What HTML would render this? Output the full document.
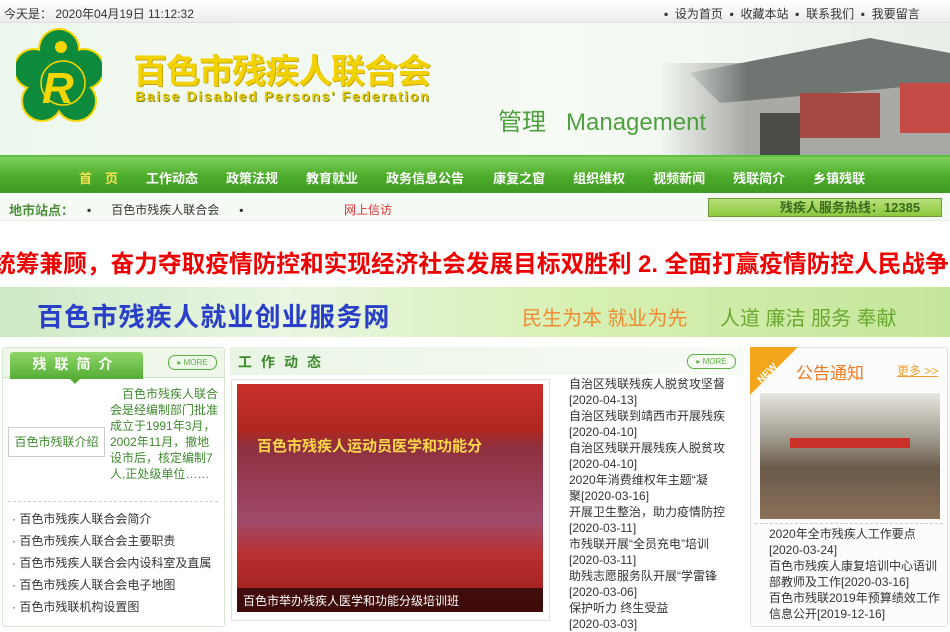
<!DOCTYPE html>
<html><head><meta charset="utf-8"><style>
*{margin:0;padding:0;box-sizing:border-box}
body{width:950px;height:621px;overflow:hidden;background:#fff;font-family:"Liberation Sans","Noto Sans CJK SC",sans-serif;font-size:12px;color:#333;position:relative}
.a{position:absolute;white-space:nowrap}
.n span{margin-left:28px}
</style></head><body>
<div class="a" style="left:0;top:0;width:950px;height:23px;background:linear-gradient(#fff,#ececec);border-bottom:1px solid #e0e0e0"></div>
<div class="a" style="left:4px;top:5px;font-size:12px;color:#333">今天是： 2020年04月19日 11:12:32</div>
<div class="a" style="left:664px;top:5px;font-size:12px;color:#333;word-spacing:0">▪ &nbsp;设为首页 &nbsp;▪ &nbsp;收藏本站 &nbsp;▪ &nbsp;联系我们 &nbsp;▪ &nbsp;我要留言</div>
<div class="a" style="left:0;top:23px;width:950px;height:133px;background:linear-gradient(90deg,#eef7ee,#f6fbf5 60%,#e8efe8)"></div>
<svg class="a" style="left:660px;top:23px" width="290" height="133"><defs><linearGradient id="f" x1="0" x2="1"><stop offset="0" stop-color="#f3f8f3" stop-opacity="1"/><stop offset=".3" stop-color="#f3f8f3" stop-opacity="0"/></linearGradient></defs>
<rect x="0" y="40" width="290" height="93" fill="#a9aaa5"/><polygon points="30,50 210,15 290,30 290,60 60,80" fill="#6f7570"/><rect x="100" y="90" width="40" height="43" fill="#4b4b48"/><rect x="140" y="70" width="80" height="45" fill="#a84a44"/><rect x="240" y="60" width="50" height="50" fill="#c34a45"/><rect x="0" y="0" width="290" height="133" fill="url(#f)"/></svg>
<svg class="a" style="left:16px;top:27px" width="86" height="100" viewBox="0 0 86 100"><g fill="#f5d600"><circle cx="43" cy="22" r="21"/><circle cx="18" cy="42" r="21"/><circle cx="68" cy="42" r="21"/><circle cx="26" cy="74" r="21"/><circle cx="60" cy="74" r="21"/><circle cx="43" cy="52" r="26"/></g><g fill="#0d8a3c"><circle cx="43" cy="22" r="19"/><circle cx="18" cy="42" r="19"/><circle cx="68" cy="42" r="19"/><circle cx="26" cy="74" r="19"/><circle cx="60" cy="74" r="19"/><circle cx="43" cy="52" r="25"/></g><circle cx="47" cy="56" r="22" fill="none" stroke="#f5d600" stroke-width="1.5"/><circle cx="45" cy="20" r="6" fill="#f5d600"/><text x="26" y="76" font-size="44" font-weight="bold" font-style="italic" fill="#f5d600" font-family="Liberation Sans">R</text></svg>
<div class="a" style="left:133px;top:44px;font-size:34px;font-weight:bold;color:#f2d200;letter-spacing:-1px;text-shadow:1px 1px 0 #c8a600">百色市残疾人联合会</div>
<div class="a" style="left:135px;top:88px;font-size:14px;font-weight:bold;color:#e8c800;letter-spacing:1.7px;text-shadow:1px 1px 0 #7a8a20">Baise Disabled Persons' Federation</div>
<div class="a" style="left:498px;top:102px;font-size:24px;color:#4ea03e">管理 &nbsp;&nbsp;Management</div>
<div class="a" style="left:0;top:155px;width:950px;height:38px;background:linear-gradient(#7dd05c,#4fae2c 50%,#3e9a22);border-top:2px solid #5cc040"></div>
<div class="a" style="left:79px;top:168px;font-size:13px;font-weight:bold;color:#f5e050">首　页</div>
<div class="a n" style="left:146px;top:168px;font-size:13px;font-weight:bold;color:#fff">工作动态<span>政策法规</span><span>教育就业</span><span>政务信息公告</span><span style="margin-left:29px">康复之窗</span><span>组织维权</span><span>视频新闻</span><span>残联简介</span><span>乡镇残联</span></div>
<div class="a" style="left:0;top:193px;width:950px;height:28px;background:#f6faf4;border-bottom:1px solid #e8eee6"></div>
<div class="a" style="left:9px;top:200px;font-size:13px;font-weight:bold;color:#4b8e3a">地市站点：</div>
<div class="a" style="left:87px;top:201px;font-size:12px;color:#333">▪ &nbsp;&nbsp;&nbsp;&nbsp;&nbsp;百色市残疾人联合会 &nbsp;&nbsp;&nbsp;&nbsp;&nbsp;▪</div>
<div class="a" style="left:344px;top:201px;font-size:12px;color:#d33">网上信访</div>
<div class="a" style="left:708px;top:198px;width:234px;height:19px;background:linear-gradient(#b8e07a,#8cc83e);border:1px solid #6e9a3a;text-align:center;font-size:13px;font-weight:bold;color:#3a6a1f;line-height:17px;padding-left:50px">残疾人服务热线：12385</div>
<div class="a" style="left:-8px;top:245px;font-size:23.7px;font-weight:bold;color:#e00;letter-spacing:0">统筹兼顾，奋力夺取疫情防控和实现经济社会发展目标双胜利 2. 全面打赢疫情防控人民战争</div>
<div class="a" style="left:0;top:287px;width:950px;height:50px;background:linear-gradient(90deg,#cde9c5,#e9f6e2 30%,#d8f0b4 60%,#c4e69a)"></div>
<div class="a" style="left:37px;top:297px;font-size:26px;font-weight:bold;color:#2a3fc8;letter-spacing:1.2px">百色市残疾人就业创业服务网</div>
<div class="a" style="left:522px;top:302px;font-size:20px;color:#f08c30">民生为本 就业为先</div>
<div class="a" style="left:720px;top:302px;font-size:20px;color:#6aa830">人道 廉洁 服务 奉献</div>
<div class="a" style="left:2px;top:347px;width:223px;height:280px;border:1px solid #d8e6d2;border-radius:3px;background:#fff"></div>
<div class="a" style="left:3px;top:348px;width:221px;height:30px;background:#eef7ea;border-bottom:1px solid #cfe3c6"></div>
<div class="a" style="left:10px;top:352px;width:133px;height:27px;background:linear-gradient(#8fd66a,#55ad35);border-radius:3px 3px 0 0;color:#fff;font-size:14px;font-weight:bold;text-align:center;line-height:25px;letter-spacing:8px">残联简介</div>
<div class="a" style="left:70px;top:379px;width:0;height:0;border:5px solid transparent;border-top-color:#55ad35"></div>
<div class="a" style="left:168px;top:355px;width:49px;height:15px;border:1px solid #5ab040;border-radius:7px;font-size:8px;color:#5ab040;text-align:center;line-height:13px">▸ MORE</div>
<div class="a" style="left:8px;top:427px;width:97px;height:30px;border:1px solid #ccc;font-size:12px;color:#3e8a2e;text-align:center;line-height:28px">百色市残联介绍</div>
<div class="a" style="left:110px;top:386px;width:110px;white-space:normal;font-size:12px;line-height:16px;color:#3e8a2e;text-indent:12px;word-break:break-all">百色市残疾人联合会是经编制部门批准成立于1991年3月， 2002年11月，撤地设市后，核定编制7人,正处级单位……</div>
<div class="a" style="left:8px;top:501px;width:210px;border-top:1px dashed #ccc"></div>
<div class="a" style="left:12px;top:508px;font-size:12px;line-height:22px;color:#333">· 百色市残疾人联合会简介<br>· 百色市残疾人联合会主要职责<br>· 百色市残疾人联合会内设科室及直属<br>· 百色市残疾人联合会电子地图<br>· 百色市残联机构设置图</div>
<div class="a" style="left:230px;top:347px;width:513px;height:28px;background:linear-gradient(90deg,#eaf5e6,#f7fbf5)"></div>
<div class="a" style="left:238px;top:352px;font-size:14px;font-weight:bold;color:#3e8a2e;letter-spacing:9px">工作动态</div>
<div class="a" style="left:687px;top:354px;width:49px;height:15px;border:1px solid #5ab040;border-radius:7px;font-size:8px;color:#5ab040;text-align:center;line-height:13px">▸ MORE</div>
<div class="a" style="left:231px;top:379px;width:319px;height:242px;border:1px solid #e0e0e0"></div>
<div class="a" style="left:237px;top:384px;width:306px;height:228px;background:linear-gradient(#c8302a 0,#b02820 20%,#8e3040 28%,#a04a6a 60%,#b83030 75%,#9a1a18);overflow:hidden"><div class="a" style="left:20px;top:51px;font-size:15px;font-weight:bold;color:#ffd84a">百色市残疾人运动员医学和功能分</div></div>
<div class="a" style="left:237px;top:588px;width:306px;height:24px;background:rgba(0,0,0,.6)"></div>
<div class="a" style="left:243px;top:592px;font-size:12px;color:#fff">百色市举办残疾人医学和功能分级培训班</div>
<div class="a" style="left:560px;top:376px;font-size:12px;line-height:16px;color:#333">
<div style="padding-left:9px">自治区残联残疾人脱贫攻坚督<br>[2020-04-13]</div>
<div style="padding-left:9px">自治区残联到靖西市开展残疾<br>[2020-04-10]</div>
<div style="padding-left:9px">自治区残联开展残疾人脱贫攻<br>[2020-04-10]</div>
<div style="padding-left:9px">2020年消费维权年主题“凝<br>聚[2020-03-16]</div>
<div style="padding-left:9px">开展卫生整治，助力疫情防控<br>[2020-03-11]</div>
<div style="padding-left:9px">市残联开展“全员充电”培训<br>[2020-03-11]</div>
<div style="padding-left:9px">助残志愿服务队开展“学雷锋<br>[2020-03-06]</div>
<div style="padding-left:9px">保护听力 终生受益<br>[2020-03-03]</div></div>
<div class="a" style="left:750px;top:347px;width:198px;height:280px;border:1px solid #e0e0e0;border-radius:3px;background:#fcfcfc"></div>
<svg class="a" style="left:750px;top:347px" width="50" height="50"><polygon points="0,0 48,0 0,48" fill="#f3a51c"/><text x="6" y="32" font-size="10" font-weight="bold" fill="#fff" transform="rotate(-45 14 28)" font-family="Liberation Sans">NEW</text></svg>
<div class="a" style="left:796px;top:359px;font-size:17px;color:#f07a20">公告通知</div>
<div class="a" style="left:897px;top:362px;font-size:12px;color:#f0a030;text-decoration:underline">更多 &gt;&gt;</div>
<div class="a" style="left:760px;top:393px;width:180px;height:126px;background:linear-gradient(#e8e6e0,#a09c90 35%,#6a5a4a 60%,#8a7058)"></div>
<div class="a" style="left:790px;top:438px;width:120px;height:10px;background:#c83028"></div>
<div class="a" style="left:755px;top:523px;width:188px;border-top:1px dashed #ccc"></div>
<div class="a" style="left:760px;top:526px;font-size:12px;line-height:16px;color:#333">
<div style="padding-left:9px">2020年全市残疾人工作要点<br>[2020-03-24]</div>
<div style="padding-left:9px">百色市残疾人康复培训中心语训<br>部教师及工作[2020-03-16]</div>
<div style="padding-left:9px">百色市残联2019年预算绩效工作<br>信息公开[2019-12-16]</div></div>
</body></html>
